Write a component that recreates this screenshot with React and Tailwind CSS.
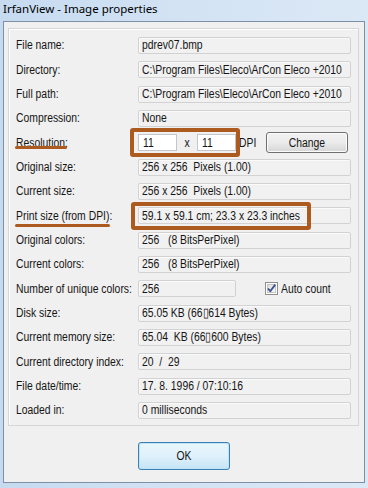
import React from "react";

const rows = [
  { label: "File name:", value: "pdrev07.bmp" },
  { label: "Directory:", value: "C:\\Program Files\\Eleco\\ArCon Eleco +2010" },
  { label: "Full path:", value: "C:\\Program Files\\Eleco\\ArCon Eleco +2010" },
  { label: "Compression:", value: "None" },
  { label: "Resolution:", type: "resolution" },
  { label: "Original size:", value: "256 x 256  Pixels (1.00)" },
  { label: "Current size:", value: "256 x 256  Pixels (1.00)" },
  { label: "Print size (from DPI):", value: "59.1 x 59.1 cm; 23.3 x 23.3 inches" },
  { label: "Original colors:", value: "256   (8 BitsPerPixel)" },
  { label: "Current colors:", value: "256   (8 BitsPerPixel)" },
  { label: "Number of unique colors:", type: "unique" },
  { label: "Disk size:", value: "65.05 KB (66\u25af614 Bytes)" },
  { label: "Current memory size:", value: "65.04  KB (66\u25af600 Bytes)" },
  { label: "Current directory index:", value: "20  /  29" },
  { label: "File date/time:", value: "17. 8. 1996 / 07:10:16" },
  { label: "Loaded in:", value: "0 milliseconds" },
];

// the old dialog font is tall and narrow, so squeeze Arial-width text a bit
function T({ children, center }) {
  return (
    <span
      className={`inline-block whitespace-pre scale-x-[0.83] ${center ? "origin-center" : "origin-left"}`}
    >
      {children}
    </span>
  );
}

function ValueBox({ children, className = "w-[213px]" }) {
  return (
    <div
      className={`${className} h-[17px] flex items-center pl-[3px] border border-[#d2d2d2] rounded-[2px] bg-[#f1f1f1] shadow-[inset_1px_1px_0_#fafafa] overflow-hidden`}
    >
      <T>{children}</T>
    </div>
  );
}

function EditBox({ children }) {
  return (
    <div className="w-[39px] h-[17px] flex items-center pl-[4px] border border-[#c3c6cc] bg-white">
      <T>{children}</T>
    </div>
  );
}

function CheckBox() {
  return (
    <svg width="13" height="13" viewBox="0 0 13 13">
      <defs>
        <linearGradient id="cbg" x1="0" y1="0" x2="1" y2="1">
          <stop offset="0" stopColor="#dcdcdc" />
          <stop offset="1" stopColor="#fbfbfb" />
        </linearGradient>
      </defs>
      <rect x="0.5" y="0.5" width="12" height="12" fill="#fff" stroke="#8f8f8f" />
      <rect x="2.5" y="2.5" width="8" height="8" fill="url(#cbg)" stroke="#c4c4c4" />
      <path d="M3 6.5 L5.3 9.2 L10.2 2.6" fill="none" stroke="#3a5192" strokeWidth="1.8" strokeLinejoin="round" />
    </svg>
  );
}

function Row({ row }) {
  return (
    <div className="flex items-center h-[17px]">
      <div className="w-[122px] whitespace-nowrap">
        <T>{row.label}</T>
      </div>
      {row.type === "resolution" ? (
        <div className="flex items-center">
          <EditBox>11</EditBox>
          <div className="w-[20px] text-center">
            <T center>x</T>
          </div>
          <EditBox>11</EditBox>
          <div className="ml-[3px] w-[27px]">
            <T>DPI</T>
          </div>
          <button className="w-[82px] h-[21px] rounded-[3px] border border-[#707070] bg-gradient-to-b from-[#f2f2f2] via-[#ebebeb] to-[#d6d6d6] shadow-[inset_0_0_0_1px_#fcfcfc]">
            <T center>Change</T>
          </button>
        </div>
      ) : row.type === "unique" ? (
        <div className="flex items-center">
          <ValueBox className="w-[98px]">256</ValueBox>
          <div className="ml-[29px] flex items-center gap-[3px]">
            <CheckBox />
            <T>Auto count</T>
          </div>
        </div>
      ) : (
        <ValueBox>{row.value}</ValueBox>
      )}
    </div>
  );
}

export default function App() {
  return (
    <div className="relative w-[368px] h-[488px] overflow-hidden bg-gradient-to-r from-[#c6daf0] via-[#d3e3f4] to-[#dbe8f6] text-[#151515] font-['Liberation_Sans',Arial,sans-serif] text-[12.5px] leading-none">
      {/* title bar */}
      <div className="h-[21px] pl-[3px] pt-[3px] font-['Noto_Sans',sans-serif] text-[11.5px] text-black">
        IrfanView - Image properties
      </div>

      {/* client area */}
      <div className="ml-[3px] w-[362px] h-[462px] border border-[#7e90a6] bg-[#f0f0f0]">
        <div className="ml-[4px] mt-[6px] w-[351px] h-[398px] border border-[#d6d6d6] shadow-[inset_1px_1px_0_#ffffff] pl-[7px] pt-[8px] flex flex-col gap-[7.33px]">
          {rows.map((row) => (
            <Row key={row.label} row={row} />
          ))}
        </div>
        <div className="mt-[16px] flex justify-center">
          <button className="w-[92px] h-[28px] rounded-[3px] border border-[#3c7fb1] bg-gradient-to-b from-[#eaf6fd] via-[#dff1fb] to-[#c5e4f5] shadow-[inset_0_0_0_1px_#bfe3f8]">
            <T center>OK</T>
          </button>
        </div>
      </div>

      {/* annotations */}
      <div className="absolute left-[130px] top-[128px] w-[110px] h-[29px] border-[4px] border-[#ad5a1e] rounded-[3px]" />
      <div className="absolute left-[131px] top-[202px] w-[180px] h-[28px] border-[4px] border-[#ad5a1e] rounded-[3px]" />
      <div className="absolute left-[15px] top-[146px] w-[52px] h-[3px] bg-[#ad5a1e] rounded-full" />
      <div className="absolute left-[15px] top-[224px] w-[95px] h-[3px] bg-[#ad5a1e] rounded-full" />
    </div>
  );
}
